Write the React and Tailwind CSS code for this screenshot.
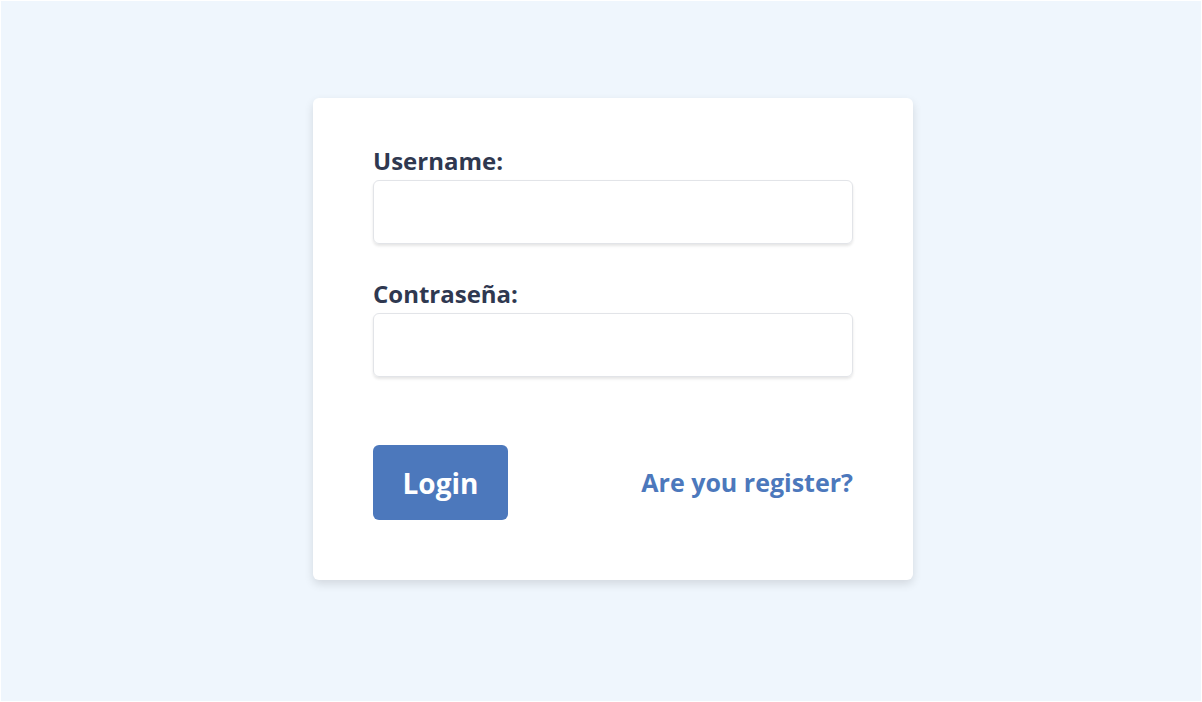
export default function App() {
  return (
    <div className="min-h-[702px] w-full bg-[#eff6fd] border border-white flex justify-center pl-[24px]" style={{ fontFamily: '"Open Sans", "Noto Sans", sans-serif' }}>
      <div className="mt-[97px] mb-auto w-[600px] bg-white rounded-md shadow-[0_4px_10px_rgba(0,0,0,0.12)] px-[60px] pt-[48px] pb-[60px]">
        <div className="flex flex-col">
          <label className="text-[24px] font-bold text-[#2f3850] leading-[30px] mb-[4px]">Username:</label>
          <input className="h-[64px] w-full rounded-md border border-[#e2e4e8] shadow-[0_2px_3px_rgba(0,0,0,0.1)] outline-none" />
          <label className="mt-[35px] text-[24px] font-bold text-[#2f3850] leading-[30px] mb-[4px]">Contraseña:</label>
          <input type="password" className="h-[64px] w-full rounded-md border border-[#e2e4e8] shadow-[0_2px_3px_rgba(0,0,0,0.1)] outline-none" />
        </div>
        <div className="mt-[68px] flex items-center justify-between">
          <button className="w-[135px] h-[75px] rounded-md bg-[#4c78bc] text-white text-[28px] font-bold">Login</button>
          <a className="text-[25px] font-bold text-[#4c78bc]">Are you register?</a>
        </div>
      </div>
    </div>
  );
}
